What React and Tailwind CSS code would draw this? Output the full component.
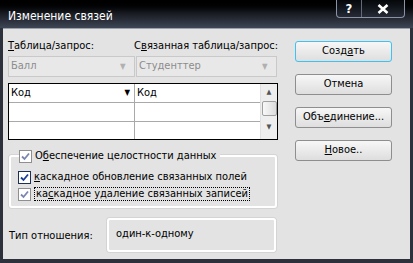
import React from "react";

const font = { fontFamily: '"DejaVu Sans Condensed", "Liberation Sans", Arial, sans-serif' };

function Check({ dim, focus }) {
  return (
    <span
      className={`flex shrink-0 w-[13px] h-[13px] items-center justify-center bg-white border ${
        focus ? "border-[#1c2f55]" : "border-[#8f8f8f]"
      }`}
    >
      <svg width="9" height="9" viewBox="0 0 9 9">
        <path
          d="M1 4.5 L3.5 7 L8 1.5"
          fill="none"
          stroke={dim ? "#7a86b0" : "#1b3a9c"}
          strokeWidth="1.8"
        />
      </svg>
    </span>
  );
}

function Btn({ children, def }) {
  return (
    <div
      className={`h-[21px] w-[97px] flex items-center justify-center rounded-[3px] border text-[11px] text-black bg-gradient-to-b from-[#f7f7f7] to-[#dedede] ${
        def ? "border-[#3cc3ef]" : "border-[#8e8e8e]"
      }`}
    >
      {children}
    </div>
  );
}

export default function App() {
  return (
    <div
      className="w-[413px] h-[263px] flex flex-col bg-[#2c313c] overflow-hidden"
      style={font}
    >
      {/* Title bar */}
      <div className="relative h-[28px] shrink-0 bg-gradient-to-b from-[#000000] via-[#1a1d24] to-[#3e4656] flex items-end pb-[5px] pl-[8px]">
        <span className="text-white text-[12px] leading-[14px]">Изменение связей</span>
        <div className="absolute top-0 right-[8px] flex h-[18px] rounded-b-[4px] border border-t-0 border-[#8a93a6] bg-gradient-to-b from-[#05070a] to-[#262b36]">
          <div className="w-[25px] flex items-center justify-center text-white font-bold text-[13px] border-r border-[#626a7c]">
            ?
          </div>
          <div className="w-[42px] flex items-center justify-center">
            <svg width="12" height="10" viewBox="0 0 12 10">
              <path d="M1.5 1 L10.5 9 M10.5 1 L1.5 9" stroke="white" strokeWidth="2.6" />
            </svg>
          </div>
        </div>
      </div>

      {/* Client */}
      <div className="flex-1 mx-[3px] mb-[4px] bg-[#e3e3e3] flex text-[11px] text-black border-t border-[#9aa0aa]">
        <div className="w-[275px] pl-[5px] flex flex-col whitespace-nowrap">
          {/* Labels */}
          <div className="flex h-[14px] mt-[10px] leading-[14px]">
            <span className="w-[127px]">
              <u>Т</u>аблица/запрос:
            </span>
            <span>
              С<u>в</u>язанная таблица/запрос:
            </span>
          </div>
          {/* Combos */}
          <div className="flex gap-[1px] mt-[3px] h-[21px]">
            <div className="w-[127px] flex items-center border border-[#c9c9c9] bg-[#e8e8e8] text-[#8c8c8c] pl-[2px]">
              <span className="flex-1">Балл</span>
              <span className="w-[14px] text-[8px] text-[#b0b0b0]">▼</span>
            </div>
            <div className="w-[141px] flex items-center border border-[#c9c9c9] bg-[#e8e8e8] text-[#8c8c8c] pl-[2px]">
              <span className="flex-1">Студенттер</span>
              <span className="w-[14px] text-[8px] text-[#b0b0b0]">▼</span>
            </div>
          </div>
          {/* Grid */}
          <div className="mt-[6px] w-[270px] h-[57px] border border-black bg-white flex">
            <div className="flex-1 flex flex-col">
              <div className="flex h-[19px] border-b border-[#a9a9a9]">
                <div className="w-[126px] flex items-center pl-[2px] border-r border-[#a9a9a9]">
                  <span className="flex-1">Код</span>
                  <span className="text-[8px] mr-[4px]">▼</span>
                </div>
                <div className="flex-1 flex items-center pl-[2px]">Код</div>
              </div>
              <div className="flex h-[19px] border-b border-[#a9a9a9]">
                <div className="w-[126px] border-r border-[#a9a9a9]" />
                <div className="flex-1" />
              </div>
              <div className="flex flex-1">
                <div className="w-[126px] border-r border-[#a9a9a9]" />
                <div className="flex-1" />
              </div>
            </div>
            <div className="w-[17px] bg-[#eeeeee] flex flex-col items-center border-l border-[#e0e0e0]">
              <div className="h-[17px] flex items-center justify-center text-[7px] text-[#555]">▲</div>
              <div className="w-[15px] h-[15px] border border-[#a0a0a0] rounded-[2px] bg-gradient-to-r from-[#f8f8f8] to-[#dcdcdc]" />
              <div className="flex-1 flex items-center justify-center text-[7px] text-[#555]">▼</div>
            </div>
          </div>

          {/* Group box */}
          <div className="relative mt-[15px] ml-[1px] w-[268px] h-[53px] rounded-[3px] border-2 border-white shadow-[0_0_0_1px_#d4d4d4] flex flex-col">
            <div className="absolute -top-[8px] left-[8px] flex items-center gap-[3px] bg-[#e3e3e3] pr-[4px] h-[14px]">
              <Check dim />
              <span>
                О<u>б</u>еспечение целостности данных
              </span>
            </div>
            <div className="flex items-center gap-[3px] ml-[7px] mt-[13px] h-[14px]">
              <Check focus />
              <span>
                <u>к</u>аскадное обновление связанных полей
              </span>
            </div>
            <div className="flex items-center gap-[3px] ml-[7px] mt-[3px] h-[14px]">
              <Check dim />
              <span className="border border-dotted border-black px-[1px] leading-[12px]">
                ка<u>с</u>кадное удаление связанных записей
              </span>
            </div>
          </div>

          {/* Relation type */}
          <div className="flex items-center mt-[10px]">
            <span className="w-[99px] pl-[1px] mt-[2px]">Тип отношения:</span>
            <div className="w-[169px] h-[34px] rounded-[3px] border-2 border-white shadow-[0_0_0_1px_#d4d4d4] pl-[7px] pt-[7px] leading-[14px]">
              один-к-одному
            </div>
          </div>
        </div>

        {/* Buttons */}
        <div className="ml-[17px] pt-[12px] flex flex-col gap-[12px]">
          <Btn def>
            Созд<u>а</u>ть
          </Btn>
          <Btn>Отмена</Btn>
          <Btn>
            Объ<u>е</u>динение...
          </Btn>
          <Btn>
            <u>Н</u>овое..
          </Btn>
        </div>
      </div>
    </div>
  );
}
